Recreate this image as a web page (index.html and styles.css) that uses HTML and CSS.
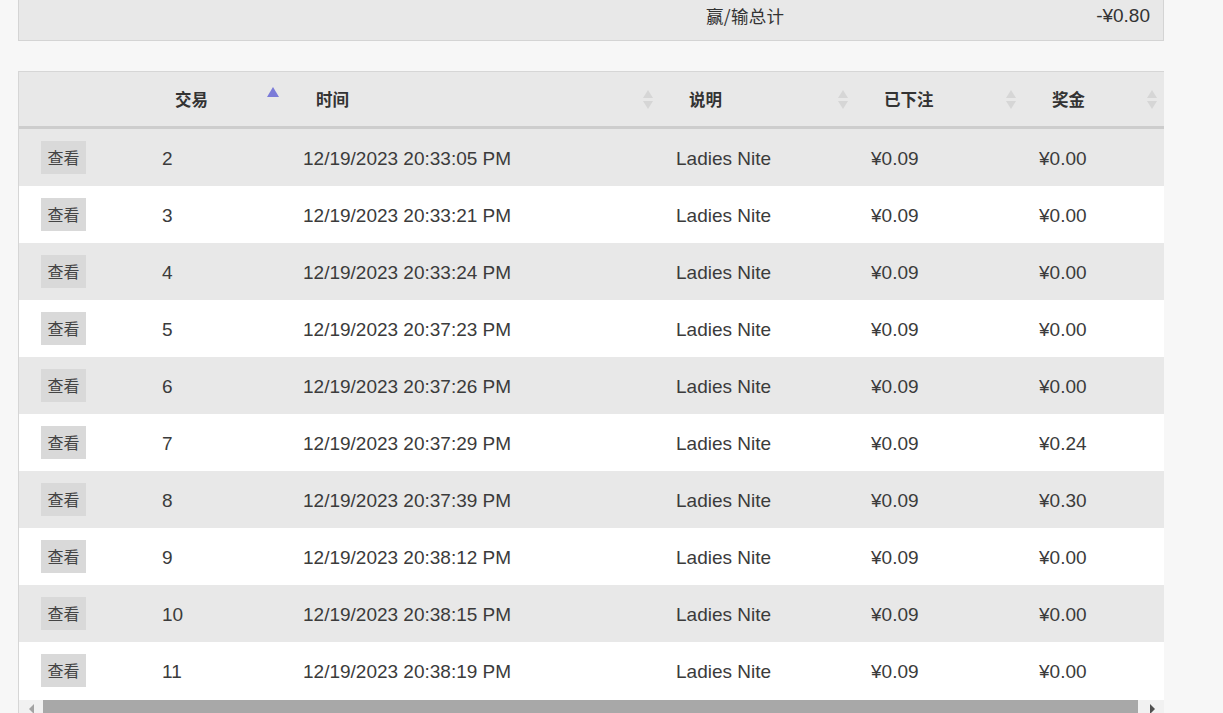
FILE: index.html
```html
<!DOCTYPE html>
<html lang="zh">
<head>
<meta charset="utf-8">
<title>交易记录</title>
<link rel="stylesheet" href="styles.css">
</head>
<body>
<div class="wrap">
  <div class="summary">
    <span class="summary-label">赢/输总计</span>
    <span class="summary-value">-¥0.80</span>
  </div>

  <div class="grid-box">
    <div class="scroller">
      <table class="tx">
        <colgroup>
          <col class="c1"><col class="c2"><col class="c3"><col class="c4"><col class="c5"><col class="c6">
        </colgroup>
        <thead>
          <tr>
            <th></th>
            <th><div class="th-in"><span>交易</span><span class="sort asc"><i class="up"></i></span></div></th>
            <th><div class="th-in"><span>时间</span><span class="sort"><i class="up"></i><i class="down"></i></span></div></th>
            <th><div class="th-in"><span>说明</span><span class="sort"><i class="up"></i><i class="down"></i></span></div></th>
            <th><div class="th-in"><span>已下注</span><span class="sort"><i class="up"></i><i class="down"></i></span></div></th>
            <th><div class="th-in"><span>奖金</span><span class="sort"><i class="up"></i><i class="down"></i></span></div></th>
          </tr>
        </thead>
        <tbody>
          <tr><td><span class="btn">查看</span></td><td>2</td><td>12/19/2023 20:33:05 PM</td><td>Ladies Nite</td><td>¥0.09</td><td>¥0.00</td></tr>
          <tr><td><span class="btn">查看</span></td><td>3</td><td>12/19/2023 20:33:21 PM</td><td>Ladies Nite</td><td>¥0.09</td><td>¥0.00</td></tr>
          <tr><td><span class="btn">查看</span></td><td>4</td><td>12/19/2023 20:33:24 PM</td><td>Ladies Nite</td><td>¥0.09</td><td>¥0.00</td></tr>
          <tr><td><span class="btn">查看</span></td><td>5</td><td>12/19/2023 20:37:23 PM</td><td>Ladies Nite</td><td>¥0.09</td><td>¥0.00</td></tr>
          <tr><td><span class="btn">查看</span></td><td>6</td><td>12/19/2023 20:37:26 PM</td><td>Ladies Nite</td><td>¥0.09</td><td>¥0.00</td></tr>
          <tr><td><span class="btn">查看</span></td><td>7</td><td>12/19/2023 20:37:29 PM</td><td>Ladies Nite</td><td>¥0.09</td><td>¥0.24</td></tr>
          <tr><td><span class="btn">查看</span></td><td>8</td><td>12/19/2023 20:37:39 PM</td><td>Ladies Nite</td><td>¥0.09</td><td>¥0.30</td></tr>
          <tr><td><span class="btn">查看</span></td><td>9</td><td>12/19/2023 20:38:12 PM</td><td>Ladies Nite</td><td>¥0.09</td><td>¥0.00</td></tr>
          <tr><td><span class="btn">查看</span></td><td>10</td><td>12/19/2023 20:38:15 PM</td><td>Ladies Nite</td><td>¥0.09</td><td>¥0.00</td></tr>
          <tr><td><span class="btn">查看</span></td><td>11</td><td>12/19/2023 20:38:19 PM</td><td>Ladies Nite</td><td>¥0.09</td><td>¥0.00</td></tr>
        </tbody>
      </table>
    </div>
    <div class="hscroll">
      <span class="arrow left"></span>
      <span class="thumb-track"><span class="thumb"></span></span>
      <span class="arrow right"></span>
    </div>
  </div>
</div>
</body>
</html>
```

FILE: styles.css
```css
html, body {
  margin: 0;
  padding: 0;
  background: #f7f7f7;
  height: 713px;
  overflow: hidden;
}

body {
  font-family: "Liberation Sans", Arial, "Noto Sans CJK SC", sans-serif;
  color: #333;
}

.wrap {
  margin-left: 18px;
  width: 1146px;
}

.summary {
  box-sizing: border-box;
  height: 41px;
  background: #e8e8e8;
  border: 1px solid #d4d4d4;
  border-top: none;
  display: flex;
  align-items: center;
  padding-left: 687px;
  padding-right: 13px;
  padding-bottom: 9px;
  color: #333;
}

.summary-label {
  font-family: "Noto Sans CJK SC", sans-serif;
  font-size: 17.5px;
  letter-spacing: 0.3px;
}

.summary-value {
  margin-left: auto;
  font-size: 19px;
}

.grid-box {
  margin-top: 30px;
  border-top: 1px solid #d6d6d6;
  border-left: 1px solid #d6d6d6;
  background: #fff;
}

.scroller {
  overflow: hidden;
}

.tx {
  border-collapse: separate;
  border-spacing: 0;
  table-layout: fixed;
  width: 1149px;
}

.c1 { width: 131px; }
.c2 { width: 141px; }
.c3 { width: 373px; }
.c4 { width: 195px; }
.c5 { width: 168px; }
.c6 { width: 141px; }

.tx thead th {
  height: 54px;
  padding: 0;
  background: #e8e8e8;
  border-bottom: 3px solid #cdcdcd;
  text-align: left;
  font-family: "Noto Sans CJK SC", sans-serif;
  font-weight: bold;
  font-size: 16.5px;
  color: #333;
}

.th-in {
  display: flex;
  align-items: center;
  padding-left: 25px;
  padding-right: 11px;
  height: 54px;
}

.sort {
  margin-left: auto;
  display: flex;
  flex-direction: column;
  align-items: center;
  gap: 3px;
  width: 10px;
}

.sort i {
  display: block;
  width: 0;
  height: 0;
  border-left: 5px solid transparent;
  border-right: 5px solid transparent;
}

.sort i.up {
  border-bottom: 8px solid #d6d6d6;
}

.sort i.down {
  border-top: 8px solid #d6d6d6;
}

.sort.asc {
  align-self: flex-start;
  margin-top: 15px;
  width: 14px;
}

.sort.asc i.up {
  border-left: 6px solid transparent;
  border-right: 6px solid transparent;
  border-bottom: 10px solid #7b7bd8;
}

.tx tbody td {
  height: 57px;
  padding: 2px 0 0 12px;
  box-sizing: border-box;
  font-size: 19px;
  line-height: 22px;
  color: #3b3b3b;
  white-space: nowrap;
  vertical-align: middle;
}

.tx tbody td:first-child {
  padding-left: 22px;
  padding-top: 0;
}

.tx tbody tr:nth-child(odd) td {
  background: #e8e8e8;
}

.tx tbody tr:nth-child(even) td {
  background: #fff;
}

.btn {
  display: inline-flex;
  align-items: center;
  justify-content: center;
  vertical-align: middle;
  width: 45px;
  height: 33px;
  background: #d9d9d9;
  font-family: "Noto Sans CJK SC", sans-serif;
  font-size: 16px;
  line-height: 1;
  color: #444;
  padding-bottom: 2px;
  box-sizing: border-box;
}

.hscroll {
  display: flex;
  align-items: stretch;
  height: 17px;
  background: #f1f1f1;
  margin-top: 1px;
}

.arrow {
  width: 24px;
  display: flex;
  align-items: center;
  justify-content: center;
}

.arrow::before {
  content: "";
  display: block;
  width: 0;
  height: 0;
  border-top: 5px solid transparent;
  border-bottom: 5px solid transparent;
}

.arrow.left::before {
  border-right: 5px solid #a3a3a3;
}

.arrow.right::before {
  border-left: 5px solid #505050;
}

.thumb-track {
  flex: 1;
  display: flex;
  padding: 0 2px 4px 0;
}

.thumb {
  flex: 1;
  background: #a8a8a8;
}
```
